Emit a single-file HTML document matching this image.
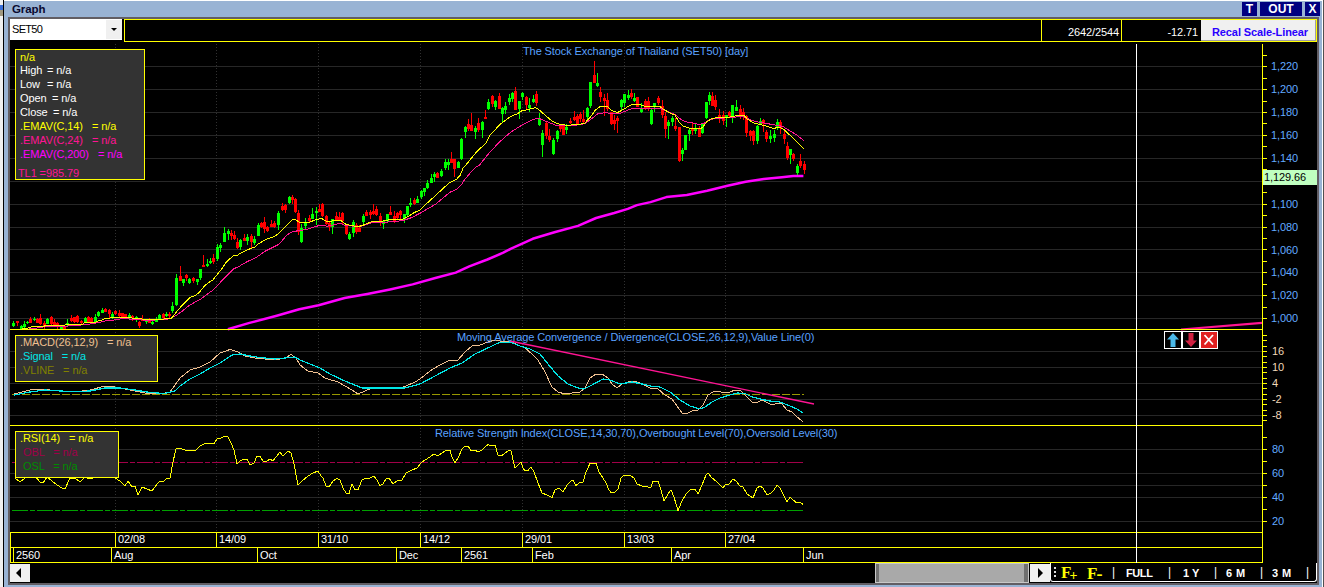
<!DOCTYPE html>
<html><head><meta charset="utf-8"><title>Graph</title>
<style>
html,body{margin:0;padding:0;}
body{width:1324px;height:587px;overflow:hidden;background:#99b3d4;font-family:"Liberation Sans",sans-serif;font-size:11px;position:relative;}
.abs{position:absolute;}
.t{position:absolute;white-space:nowrap;line-height:13px;font-size:11px;letter-spacing:-0.1px;}
.t i{position:absolute;font-style:normal;top:0;}
.ax{color:#62aaff;}
.mx{color:#f0d8b8;}
.w{color:#fff;}
.btn{position:absolute;background:#000080;color:#fff;font-weight:bold;font-size:12px;text-align:center;line-height:14px;top:2px;height:14px;}
.ib{position:absolute;background:#333;border:1px solid #ffff00;box-sizing:border-box;}
.tb{position:absolute;top:567px;color:#fff;font-weight:bold;font-size:11px;line-height:13px;white-space:nowrap;}
</style></head><body>
<!-- left strip / frame -->
<div class="abs" style="left:0;top:0;width:3px;height:587px;background:#f0f0f0"></div>
<div class="abs" style="left:0;top:5px;width:3px;height:5px;background:#3a6fd8"></div>
<div class="abs" style="left:0;top:10px;width:3px;height:6px;background:#a09880"></div>
<div class="abs" style="left:3px;top:0;width:1px;height:587px;background:#000"></div>
<div class="abs" style="left:4px;top:0;width:1319px;height:1px;background:#ffffff"></div>
<!-- inner gray border + black client -->
<div class="abs" style="left:8px;top:17px;width:1311px;height:568px;background:#625e64"></div>
<div class="abs" style="left:10px;top:19px;width:1307px;height:564px;background:#000"></div>
<div class="abs" style="left:1322px;top:0;width:1px;height:587px;background:#ffffff"></div>
<div class="abs" style="left:1323px;top:0;width:1px;height:587px;background:#505050"></div>
<!-- title -->
<div class="t" style="left:12px;top:2px;font-weight:bold;font-size:11.5px;color:#0a0a30;line-height:14px">Graph</div>
<div class="btn" style="left:1242px;width:15px;">T</div>
<div class="btn" style="left:1260px;width:42px;">OUT</div>
<div class="btn" style="left:1305px;width:15px;">X</div>
<!-- combo -->
<div class="abs" style="left:10px;top:19px;width:112px;height:21px;background:#fff"></div>
<div class="abs" style="left:106px;top:20px;width:16px;height:19px;background:#f0f0f0"></div>
<div class="abs" style="left:111px;top:28px;width:0;height:0;border-left:3px solid transparent;border-right:3px solid transparent;border-top:3px solid #000"></div>
<div class="t" style="left:12px;top:23px;color:#000;letter-spacing:-0.7px">SET50</div>
<!-- top yellow frame -->
<div class="abs" style="left:124px;top:19px;width:1193px;height:23px;border:1px solid #ffff00;box-sizing:border-box"></div>
<div class="abs" style="left:1041px;top:19px;width:1px;height:23px;background:#ffff00"></div>
<div class="abs" style="left:1121px;top:19px;width:1px;height:23px;background:#ffff00"></div>
<div class="t w" style="left:1042px;width:77px;text-align:right;top:26px;">2642/2544</div>
<div class="t w" style="left:1122px;width:76px;text-align:right;top:26px;">-12.71</div>
<div class="abs" style="left:1201px;top:20px;width:115px;height:21px;background:#f0f0f0;border-bottom:1px solid #a0a0a0;border-right:1px solid #a0a0a0;box-sizing:border-box"></div>
<div class="t" style="left:1201px;width:115px;text-align:center;top:26px;color:#2a00ff;font-weight:bold;font-size:11px;padding-left:3px;box-sizing:border-box">Recal Scale-Linear</div>

<svg class="abs" style="left:0;top:0" width="1324" height="587" viewBox="0 0 1324 587">
<rect x="10" y="66" width="1252" height="1" fill="#272727"/>
<rect x="10" y="89" width="1252" height="1" fill="#272727"/>
<rect x="10" y="112" width="1252" height="1" fill="#272727"/>
<rect x="10" y="135" width="1252" height="1" fill="#272727"/>
<rect x="10" y="158" width="1252" height="1" fill="#272727"/>
<rect x="10" y="181" width="1252" height="1" fill="#272727"/>
<rect x="10" y="204" width="1252" height="1" fill="#272727"/>
<rect x="10" y="227" width="1252" height="1" fill="#272727"/>
<rect x="10" y="249" width="1252" height="1" fill="#272727"/>
<rect x="10" y="272" width="1252" height="1" fill="#272727"/>
<rect x="10" y="295" width="1252" height="1" fill="#272727"/>
<rect x="10" y="318" width="1252" height="1" fill="#272727"/>
<rect x="10" y="351" width="1252" height="1" fill="#272727"/>
<rect x="10" y="367" width="1252" height="1" fill="#272727"/>
<rect x="10" y="383" width="1252" height="1" fill="#272727"/>
<rect x="10" y="399" width="1252" height="1" fill="#272727"/>
<rect x="10" y="415" width="1252" height="1" fill="#272727"/>
<rect x="10" y="449" width="1252" height="1" fill="#272727"/>
<rect x="10" y="473" width="1252" height="1" fill="#272727"/>
<rect x="10" y="485" width="1252" height="1" fill="#272727"/>
<rect x="10" y="497" width="1252" height="1" fill="#272727"/>
<rect x="10" y="521" width="1252" height="1" fill="#272727"/>
<line x1="115.5" y1="44" x2="115.5" y2="532" stroke="#303030" stroke-width="1" stroke-dasharray="1,2" shape-rendering="crispEdges"/>
<line x1="216.5" y1="44" x2="216.5" y2="532" stroke="#303030" stroke-width="1" stroke-dasharray="1,2" shape-rendering="crispEdges"/>
<line x1="318.5" y1="44" x2="318.5" y2="532" stroke="#303030" stroke-width="1" stroke-dasharray="1,2" shape-rendering="crispEdges"/>
<line x1="420.5" y1="44" x2="420.5" y2="532" stroke="#303030" stroke-width="1" stroke-dasharray="1,2" shape-rendering="crispEdges"/>
<line x1="522.5" y1="44" x2="522.5" y2="532" stroke="#303030" stroke-width="1" stroke-dasharray="1,2" shape-rendering="crispEdges"/>
<line x1="624.5" y1="44" x2="624.5" y2="532" stroke="#303030" stroke-width="1" stroke-dasharray="1,2" shape-rendering="crispEdges"/>
<line x1="725.5" y1="44" x2="725.5" y2="532" stroke="#303030" stroke-width="1" stroke-dasharray="1,2" shape-rendering="crispEdges"/>
<line x1="12" y1="394.5" x2="804" y2="394.5" stroke="#999900" stroke-width="1" stroke-dasharray="8,2" shape-rendering="crispEdges"/>
<line x1="12" y1="462.5" x2="804" y2="462.5" stroke="#a00048" stroke-width="1" stroke-dasharray="16,2,5,2" shape-rendering="crispEdges"/>
<line x1="12" y1="510.5" x2="804" y2="510.5" stroke="#00a000" stroke-width="1" stroke-dasharray="16,2,5,2" shape-rendering="crispEdges"/>
<polyline points="227.9,329.3 249.5,322.9 276.7,315.7 299.3,309.3 318.6,305.2 344.6,298.0 367.3,293.9 390.0,289.4 412.6,284.4 435.3,278.0 455.7,272.6 469.3,266.3 487.4,259.5 503.3,252.7 511.1,248.6 520.0,244.7 532.7,238.8 555.3,232.0 578.0,225.9 596.1,218.0 614.2,213.0 627.8,208.9 636.9,205.1 650.5,202.1 666.4,197.1 686.8,194.9 707.1,190.8 727.5,185.8 745.7,181.7 763.8,179.0 781.9,177.2 793.3,176.1 803.4,176.1" fill="none" stroke="#ff00ff" stroke-width="2.5" stroke-linejoin="round"/>
<line x1="1181" y1="329.5" x2="1262" y2="322.8" stroke="#ff1493" stroke-width="2.2"/>
<rect x="13" y="321" width="1" height="6" fill="#00ff00"/>
<rect x="12" y="323" width="3" height="3" fill="#00ff00"/>
<rect x="17" y="321" width="1" height="5" fill="#ff0000"/>
<rect x="16" y="321" width="3" height="2" fill="#ff0000"/>
<rect x="21" y="325" width="1" height="4" fill="#00ff00"/>
<rect x="20" y="326" width="3" height="3" fill="#00ff00"/>
<rect x="24" y="321" width="1" height="7" fill="#00ff00"/>
<rect x="23" y="324" width="3" height="3" fill="#00ff00"/>
<rect x="27" y="321" width="1" height="3" fill="#00ff00"/>
<rect x="26" y="322" width="3" height="1" fill="#00ff00"/>
<rect x="30" y="317" width="1" height="6" fill="#ff0000"/>
<rect x="29" y="319" width="3" height="4" fill="#ff0000"/>
<rect x="34" y="317" width="1" height="4" fill="#00ff00"/>
<rect x="33" y="319" width="3" height="1" fill="#00ff00"/>
<rect x="37" y="318" width="1" height="5" fill="#ff0000"/>
<rect x="36" y="319" width="3" height="4" fill="#ff0000"/>
<rect x="40" y="314" width="1" height="11" fill="#ff0000"/>
<rect x="39" y="318" width="3" height="6" fill="#ff0000"/>
<rect x="44" y="321" width="1" height="8" fill="#ff0000"/>
<rect x="43" y="323" width="3" height="3" fill="#ff0000"/>
<rect x="47" y="318" width="1" height="6" fill="#00ff00"/>
<rect x="46" y="319" width="3" height="5" fill="#00ff00"/>
<rect x="51" y="316" width="1" height="9" fill="#ff0000"/>
<rect x="50" y="317" width="3" height="7" fill="#ff0000"/>
<rect x="54" y="319" width="1" height="7" fill="#ff0000"/>
<rect x="53" y="322" width="3" height="3" fill="#ff0000"/>
<rect x="57" y="322" width="1" height="7" fill="#ff0000"/>
<rect x="56" y="323" width="3" height="3" fill="#ff0000"/>
<rect x="61" y="326" width="1" height="3" fill="#00ff00"/>
<rect x="60" y="327" width="3" height="2" fill="#00ff00"/>
<rect x="64" y="325" width="1" height="5" fill="#ff0000"/>
<rect x="63" y="326" width="3" height="3" fill="#ff0000"/>
<rect x="67" y="319" width="1" height="7" fill="#00ff00"/>
<rect x="66" y="323" width="3" height="2" fill="#00ff00"/>
<rect x="71" y="315" width="1" height="7" fill="#ff0000"/>
<rect x="70" y="318" width="3" height="3" fill="#ff0000"/>
<rect x="74" y="317" width="1" height="6" fill="#ff0000"/>
<rect x="73" y="317" width="3" height="5" fill="#ff0000"/>
<rect x="77" y="315" width="1" height="8" fill="#ff0000"/>
<rect x="76" y="316" width="3" height="6" fill="#ff0000"/>
<rect x="81" y="320" width="1" height="4" fill="#ff0000"/>
<rect x="80" y="321" width="3" height="2" fill="#ff0000"/>
<rect x="85" y="317" width="1" height="5" fill="#00ff00"/>
<rect x="84" y="318" width="3" height="4" fill="#00ff00"/>
<rect x="88" y="316" width="1" height="6" fill="#ff0000"/>
<rect x="87" y="317" width="3" height="5" fill="#ff0000"/>
<rect x="91" y="317" width="1" height="5" fill="#ff0000"/>
<rect x="90" y="318" width="3" height="4" fill="#ff0000"/>
<rect x="95" y="314" width="1" height="9" fill="#00ff00"/>
<rect x="94" y="317" width="3" height="5" fill="#00ff00"/>
<rect x="98" y="311" width="1" height="6" fill="#00ff00"/>
<rect x="97" y="312" width="3" height="4" fill="#00ff00"/>
<rect x="102" y="308" width="1" height="5" fill="#00ff00"/>
<rect x="101" y="310" width="3" height="3" fill="#00ff00"/>
<rect x="105" y="308" width="1" height="4" fill="#ff0000"/>
<rect x="104" y="309" width="3" height="3" fill="#ff0000"/>
<rect x="109" y="309" width="1" height="10" fill="#ff0000"/>
<rect x="108" y="310" width="3" height="4" fill="#ff0000"/>
<rect x="112" y="312" width="1" height="7" fill="#00ff00"/>
<rect x="111" y="314" width="3" height="4" fill="#00ff00"/>
<rect x="115" y="310" width="1" height="5" fill="#ff0000"/>
<rect x="114" y="311" width="3" height="3" fill="#ff0000"/>
<rect x="119" y="310" width="1" height="7" fill="#ff0000"/>
<rect x="118" y="313" width="3" height="3" fill="#ff0000"/>
<rect x="122" y="313" width="1" height="4" fill="#ff0000"/>
<rect x="121" y="313" width="3" height="4" fill="#ff0000"/>
<rect x="125" y="314" width="1" height="3" fill="#ff0000"/>
<rect x="124" y="314" width="3" height="3" fill="#ff0000"/>
<rect x="129" y="313" width="1" height="6" fill="#00ff00"/>
<rect x="128" y="315" width="3" height="3" fill="#00ff00"/>
<rect x="132" y="315" width="1" height="6" fill="#ff0000"/>
<rect x="131" y="316" width="3" height="2" fill="#ff0000"/>
<rect x="136" y="316" width="1" height="6" fill="#00ff00"/>
<rect x="135" y="317" width="3" height="2" fill="#00ff00"/>
<rect x="139" y="321" width="1" height="7" fill="#ff0000"/>
<rect x="138" y="322" width="3" height="4" fill="#ff0000"/>
<rect x="142" y="315" width="1" height="6" fill="#ff0000"/>
<rect x="141" y="319" width="3" height="2" fill="#ff0000"/>
<rect x="146" y="319" width="1" height="5" fill="#00ff00"/>
<rect x="145" y="321" width="3" height="1" fill="#00ff00"/>
<rect x="149" y="318" width="1" height="5" fill="#ff0000"/>
<rect x="148" y="319" width="3" height="4" fill="#ff0000"/>
<rect x="152" y="321" width="1" height="4" fill="#00ff00"/>
<rect x="151" y="322" width="3" height="2" fill="#00ff00"/>
<rect x="156" y="317" width="1" height="5" fill="#00ff00"/>
<rect x="155" y="319" width="3" height="3" fill="#00ff00"/>
<rect x="159" y="314" width="1" height="5" fill="#00ff00"/>
<rect x="158" y="315" width="3" height="4" fill="#00ff00"/>
<rect x="163" y="313" width="1" height="6" fill="#ff0000"/>
<rect x="162" y="314" width="3" height="4" fill="#ff0000"/>
<rect x="166" y="312" width="1" height="5" fill="#00ff00"/>
<rect x="165" y="314" width="3" height="2" fill="#00ff00"/>
<rect x="169" y="312" width="1" height="6" fill="#ff0000"/>
<rect x="168" y="314" width="3" height="2" fill="#ff0000"/>
<rect x="172" y="302" width="1" height="11" fill="#00ff00"/>
<rect x="171" y="306" width="3" height="5" fill="#00ff00"/>
<rect x="176" y="274" width="1" height="32" fill="#00ff00"/>
<rect x="175" y="278" width="3" height="27" fill="#00ff00"/>
<rect x="180" y="266" width="1" height="15" fill="#ff0000"/>
<rect x="179" y="276" width="3" height="5" fill="#ff0000"/>
<rect x="183" y="279" width="1" height="7" fill="#00ff00"/>
<rect x="182" y="279" width="3" height="4" fill="#00ff00"/>
<rect x="186" y="274" width="1" height="7" fill="#ff0000"/>
<rect x="185" y="275" width="3" height="3" fill="#ff0000"/>
<rect x="189" y="278" width="1" height="6" fill="#00ff00"/>
<rect x="188" y="279" width="3" height="4" fill="#00ff00"/>
<rect x="193" y="277" width="1" height="6" fill="#ff0000"/>
<rect x="192" y="278" width="3" height="3" fill="#ff0000"/>
<rect x="197" y="279" width="1" height="6" fill="#00ff00"/>
<rect x="196" y="279" width="3" height="3" fill="#00ff00"/>
<rect x="200" y="269" width="1" height="11" fill="#00ff00"/>
<rect x="199" y="269" width="3" height="9" fill="#00ff00"/>
<rect x="203" y="255" width="1" height="12" fill="#ff0000"/>
<rect x="202" y="265" width="3" height="2" fill="#ff0000"/>
<rect x="207" y="259" width="1" height="8" fill="#00ff00"/>
<rect x="206" y="264" width="3" height="2" fill="#00ff00"/>
<rect x="210" y="258" width="1" height="6" fill="#00ff00"/>
<rect x="209" y="261" width="3" height="2" fill="#00ff00"/>
<rect x="213" y="254" width="1" height="10" fill="#ff0000"/>
<rect x="212" y="258" width="3" height="4" fill="#ff0000"/>
<rect x="217" y="244" width="1" height="17" fill="#00ff00"/>
<rect x="216" y="247" width="3" height="12" fill="#00ff00"/>
<rect x="220" y="243" width="1" height="9" fill="#00ff00"/>
<rect x="219" y="245" width="3" height="3" fill="#00ff00"/>
<rect x="224" y="227" width="1" height="15" fill="#00ff00"/>
<rect x="223" y="233" width="3" height="9" fill="#00ff00"/>
<rect x="228" y="229" width="1" height="11" fill="#00ff00"/>
<rect x="227" y="231" width="3" height="3" fill="#00ff00"/>
<rect x="231" y="230" width="1" height="10" fill="#ff0000"/>
<rect x="230" y="233" width="3" height="3" fill="#ff0000"/>
<rect x="234" y="231" width="1" height="9" fill="#ff0000"/>
<rect x="233" y="235" width="3" height="4" fill="#ff0000"/>
<rect x="237" y="238" width="1" height="11" fill="#ff0000"/>
<rect x="236" y="242" width="3" height="6" fill="#ff0000"/>
<rect x="240" y="239" width="1" height="11" fill="#00ff00"/>
<rect x="239" y="240" width="3" height="7" fill="#00ff00"/>
<rect x="244" y="234" width="1" height="7" fill="#ff0000"/>
<rect x="243" y="238" width="3" height="3" fill="#ff0000"/>
<rect x="247" y="234" width="1" height="11" fill="#00ff00"/>
<rect x="246" y="237" width="3" height="4" fill="#00ff00"/>
<rect x="251" y="234" width="1" height="14" fill="#ff0000"/>
<rect x="250" y="236" width="3" height="6" fill="#ff0000"/>
<rect x="254" y="236" width="1" height="9" fill="#00ff00"/>
<rect x="253" y="239" width="3" height="4" fill="#00ff00"/>
<rect x="258" y="223" width="1" height="13" fill="#00ff00"/>
<rect x="257" y="225" width="3" height="11" fill="#00ff00"/>
<rect x="261" y="222" width="1" height="6" fill="#ff0000"/>
<rect x="260" y="223" width="3" height="4" fill="#ff0000"/>
<rect x="264" y="217" width="1" height="16" fill="#ff0000"/>
<rect x="263" y="222" width="3" height="7" fill="#ff0000"/>
<rect x="267" y="226" width="1" height="6" fill="#ff0000"/>
<rect x="266" y="227" width="3" height="4" fill="#ff0000"/>
<rect x="271" y="220" width="1" height="7" fill="#ff0000"/>
<rect x="270" y="224" width="3" height="3" fill="#ff0000"/>
<rect x="274" y="221" width="1" height="7" fill="#ff0000"/>
<rect x="273" y="223" width="3" height="4" fill="#ff0000"/>
<rect x="278" y="211" width="1" height="19" fill="#00ff00"/>
<rect x="277" y="213" width="3" height="12" fill="#00ff00"/>
<rect x="282" y="203" width="1" height="8" fill="#ff0000"/>
<rect x="281" y="206" width="3" height="4" fill="#ff0000"/>
<rect x="285" y="204" width="1" height="9" fill="#ff0000"/>
<rect x="284" y="205" width="3" height="5" fill="#ff0000"/>
<rect x="289" y="196" width="1" height="8" fill="#00ff00"/>
<rect x="288" y="197" width="3" height="6" fill="#00ff00"/>
<rect x="292" y="195" width="1" height="9" fill="#ff0000"/>
<rect x="291" y="197" width="3" height="3" fill="#ff0000"/>
<rect x="295" y="198" width="1" height="15" fill="#ff0000"/>
<rect x="294" y="199" width="3" height="13" fill="#ff0000"/>
<rect x="298" y="210" width="1" height="25" fill="#ff0000"/>
<rect x="297" y="213" width="3" height="19" fill="#ff0000"/>
<rect x="301" y="224" width="1" height="19" fill="#00ff00"/>
<rect x="300" y="228" width="3" height="14" fill="#00ff00"/>
<rect x="305" y="218" width="1" height="12" fill="#00ff00"/>
<rect x="304" y="222" width="3" height="4" fill="#00ff00"/>
<rect x="309" y="215" width="1" height="7" fill="#ff0000"/>
<rect x="308" y="218" width="3" height="3" fill="#ff0000"/>
<rect x="312" y="208" width="1" height="11" fill="#00ff00"/>
<rect x="311" y="214" width="3" height="5" fill="#00ff00"/>
<rect x="316" y="207" width="1" height="18" fill="#00ff00"/>
<rect x="315" y="211" width="3" height="2" fill="#00ff00"/>
<rect x="319" y="204" width="1" height="8" fill="#ff0000"/>
<rect x="318" y="209" width="3" height="3" fill="#ff0000"/>
<rect x="322" y="203" width="1" height="14" fill="#ff0000"/>
<rect x="321" y="204" width="3" height="12" fill="#ff0000"/>
<rect x="326" y="215" width="1" height="10" fill="#ff0000"/>
<rect x="325" y="216" width="3" height="8" fill="#ff0000"/>
<rect x="329" y="222" width="1" height="9" fill="#ff0000"/>
<rect x="328" y="223" width="3" height="4" fill="#ff0000"/>
<rect x="332" y="219" width="1" height="15" fill="#00ff00"/>
<rect x="331" y="219" width="3" height="8" fill="#00ff00"/>
<rect x="336" y="212" width="1" height="9" fill="#ff0000"/>
<rect x="335" y="216" width="3" height="4" fill="#ff0000"/>
<rect x="339" y="212" width="1" height="8" fill="#ff0000"/>
<rect x="338" y="217" width="3" height="3" fill="#ff0000"/>
<rect x="342" y="212" width="1" height="12" fill="#ff0000"/>
<rect x="341" y="213" width="3" height="8" fill="#ff0000"/>
<rect x="346" y="224" width="1" height="11" fill="#ff0000"/>
<rect x="345" y="225" width="3" height="9" fill="#ff0000"/>
<rect x="349" y="232" width="1" height="8" fill="#00ff00"/>
<rect x="348" y="234" width="3" height="5" fill="#00ff00"/>
<rect x="353" y="220" width="1" height="17" fill="#00ff00"/>
<rect x="352" y="222" width="3" height="11" fill="#00ff00"/>
<rect x="356" y="223" width="1" height="11" fill="#ff0000"/>
<rect x="355" y="225" width="3" height="7" fill="#ff0000"/>
<rect x="359" y="225" width="1" height="7" fill="#ff0000"/>
<rect x="358" y="228" width="3" height="4" fill="#ff0000"/>
<rect x="363" y="214" width="1" height="11" fill="#00ff00"/>
<rect x="362" y="216" width="3" height="6" fill="#00ff00"/>
<rect x="366" y="210" width="1" height="6" fill="#ff0000"/>
<rect x="365" y="212" width="3" height="4" fill="#ff0000"/>
<rect x="370" y="210" width="1" height="9" fill="#ff0000"/>
<rect x="369" y="212" width="3" height="3" fill="#ff0000"/>
<rect x="373" y="204" width="1" height="11" fill="#ff0000"/>
<rect x="372" y="211" width="3" height="3" fill="#ff0000"/>
<rect x="376" y="206" width="1" height="10" fill="#ff0000"/>
<rect x="375" y="209" width="3" height="6" fill="#ff0000"/>
<rect x="380" y="213" width="1" height="13" fill="#ff0000"/>
<rect x="379" y="216" width="3" height="5" fill="#ff0000"/>
<rect x="383" y="220" width="1" height="9" fill="#00ff00"/>
<rect x="382" y="221" width="3" height="3" fill="#00ff00"/>
<rect x="387" y="214" width="1" height="9" fill="#00ff00"/>
<rect x="386" y="214" width="3" height="7" fill="#00ff00"/>
<rect x="390" y="206" width="1" height="9" fill="#ff0000"/>
<rect x="389" y="212" width="3" height="3" fill="#ff0000"/>
<rect x="394" y="211" width="1" height="12" fill="#ff0000"/>
<rect x="393" y="216" width="3" height="5" fill="#ff0000"/>
<rect x="397" y="212" width="1" height="7" fill="#ff0000"/>
<rect x="396" y="213" width="3" height="5" fill="#ff0000"/>
<rect x="400" y="210" width="1" height="9" fill="#ff0000"/>
<rect x="399" y="211" width="3" height="4" fill="#ff0000"/>
<rect x="404" y="214" width="1" height="9" fill="#00ff00"/>
<rect x="403" y="214" width="3" height="6" fill="#00ff00"/>
<rect x="407" y="206" width="1" height="10" fill="#00ff00"/>
<rect x="406" y="206" width="3" height="9" fill="#00ff00"/>
<rect x="410" y="198" width="1" height="9" fill="#00ff00"/>
<rect x="409" y="203" width="3" height="2" fill="#00ff00"/>
<rect x="414" y="198" width="1" height="7" fill="#ff0000"/>
<rect x="413" y="200" width="3" height="4" fill="#ff0000"/>
<rect x="417" y="196" width="1" height="7" fill="#00ff00"/>
<rect x="416" y="199" width="3" height="4" fill="#00ff00"/>
<rect x="421" y="190" width="1" height="9" fill="#00ff00"/>
<rect x="420" y="191" width="3" height="6" fill="#00ff00"/>
<rect x="424" y="188" width="1" height="8" fill="#00ff00"/>
<rect x="423" y="188" width="3" height="4" fill="#00ff00"/>
<rect x="427" y="180" width="1" height="9" fill="#00ff00"/>
<rect x="426" y="183" width="3" height="5" fill="#00ff00"/>
<rect x="431" y="174" width="1" height="9" fill="#00ff00"/>
<rect x="430" y="178" width="3" height="5" fill="#00ff00"/>
<rect x="434" y="172" width="1" height="10" fill="#00ff00"/>
<rect x="433" y="174" width="3" height="3" fill="#00ff00"/>
<rect x="437" y="172" width="1" height="6" fill="#ff0000"/>
<rect x="436" y="173" width="3" height="5" fill="#ff0000"/>
<rect x="441" y="169" width="1" height="8" fill="#00ff00"/>
<rect x="440" y="171" width="3" height="5" fill="#00ff00"/>
<rect x="445" y="159" width="1" height="11" fill="#00ff00"/>
<rect x="444" y="162" width="3" height="6" fill="#00ff00"/>
<rect x="448" y="159" width="1" height="11" fill="#00ff00"/>
<rect x="447" y="162" width="3" height="3" fill="#00ff00"/>
<rect x="451" y="152" width="1" height="11" fill="#ff0000"/>
<rect x="450" y="159" width="3" height="4" fill="#ff0000"/>
<rect x="454" y="159" width="1" height="18" fill="#ff0000"/>
<rect x="453" y="159" width="3" height="10" fill="#ff0000"/>
<rect x="458" y="161" width="1" height="7" fill="#00ff00"/>
<rect x="457" y="162" width="3" height="6" fill="#00ff00"/>
<rect x="461" y="138" width="1" height="22" fill="#00ff00"/>
<rect x="460" y="139" width="3" height="20" fill="#00ff00"/>
<rect x="465" y="126" width="1" height="12" fill="#00ff00"/>
<rect x="464" y="127" width="3" height="5" fill="#00ff00"/>
<rect x="468" y="119" width="1" height="12" fill="#ff0000"/>
<rect x="467" y="124" width="3" height="5" fill="#ff0000"/>
<rect x="471" y="113" width="1" height="18" fill="#ff0000"/>
<rect x="470" y="125" width="3" height="6" fill="#ff0000"/>
<rect x="475" y="126" width="1" height="13" fill="#00ff00"/>
<rect x="474" y="128" width="3" height="4" fill="#00ff00"/>
<rect x="478" y="118" width="1" height="14" fill="#ff0000"/>
<rect x="477" y="123" width="3" height="7" fill="#ff0000"/>
<rect x="482" y="121" width="1" height="17" fill="#00ff00"/>
<rect x="481" y="122" width="3" height="8" fill="#00ff00"/>
<rect x="485" y="110" width="1" height="9" fill="#ff0000"/>
<rect x="484" y="117" width="3" height="2" fill="#ff0000"/>
<rect x="488" y="99" width="1" height="11" fill="#00ff00"/>
<rect x="487" y="102" width="3" height="7" fill="#00ff00"/>
<rect x="492" y="95" width="1" height="12" fill="#ff0000"/>
<rect x="491" y="96" width="3" height="8" fill="#ff0000"/>
<rect x="495" y="100" width="1" height="10" fill="#00ff00"/>
<rect x="494" y="101" width="3" height="6" fill="#00ff00"/>
<rect x="499" y="93" width="1" height="16" fill="#ff0000"/>
<rect x="498" y="96" width="3" height="13" fill="#ff0000"/>
<rect x="502" y="107" width="1" height="15" fill="#00ff00"/>
<rect x="501" y="108" width="3" height="6" fill="#00ff00"/>
<rect x="505" y="102" width="1" height="12" fill="#00ff00"/>
<rect x="504" y="106" width="3" height="4" fill="#00ff00"/>
<rect x="509" y="94" width="1" height="11" fill="#00ff00"/>
<rect x="508" y="98" width="3" height="4" fill="#00ff00"/>
<rect x="512" y="92" width="1" height="10" fill="#00ff00"/>
<rect x="511" y="93" width="3" height="6" fill="#00ff00"/>
<rect x="515" y="87" width="1" height="23" fill="#ff0000"/>
<rect x="514" y="91" width="3" height="19" fill="#ff0000"/>
<rect x="519" y="101" width="1" height="18" fill="#00ff00"/>
<rect x="518" y="101" width="3" height="8" fill="#00ff00"/>
<rect x="522" y="92" width="1" height="8" fill="#00ff00"/>
<rect x="521" y="93" width="3" height="4" fill="#00ff00"/>
<rect x="526" y="96" width="1" height="13" fill="#ff0000"/>
<rect x="525" y="97" width="3" height="8" fill="#ff0000"/>
<rect x="529" y="98" width="1" height="14" fill="#00ff00"/>
<rect x="528" y="105" width="3" height="3" fill="#00ff00"/>
<rect x="533" y="95" width="1" height="8" fill="#00ff00"/>
<rect x="532" y="99" width="3" height="3" fill="#00ff00"/>
<rect x="536" y="91" width="1" height="15" fill="#ff0000"/>
<rect x="535" y="94" width="3" height="9" fill="#ff0000"/>
<rect x="539" y="113" width="1" height="13" fill="#00ff00"/>
<rect x="538" y="118" width="3" height="7" fill="#00ff00"/>
<rect x="542" y="130" width="1" height="27" fill="#00ff00"/>
<rect x="541" y="133" width="3" height="12" fill="#00ff00"/>
<rect x="546" y="122" width="1" height="17" fill="#ff0000"/>
<rect x="545" y="123" width="3" height="13" fill="#ff0000"/>
<rect x="549" y="129" width="1" height="13" fill="#ff0000"/>
<rect x="548" y="136" width="3" height="4" fill="#ff0000"/>
<rect x="553" y="138" width="1" height="17" fill="#00ff00"/>
<rect x="552" y="140" width="3" height="14" fill="#00ff00"/>
<rect x="557" y="130" width="1" height="12" fill="#00ff00"/>
<rect x="556" y="131" width="3" height="8" fill="#00ff00"/>
<rect x="560" y="125" width="1" height="7" fill="#ff0000"/>
<rect x="559" y="126" width="3" height="3" fill="#ff0000"/>
<rect x="563" y="124" width="1" height="11" fill="#ff0000"/>
<rect x="562" y="125" width="3" height="10" fill="#ff0000"/>
<rect x="566" y="124" width="1" height="10" fill="#00ff00"/>
<rect x="565" y="127" width="3" height="3" fill="#00ff00"/>
<rect x="570" y="118" width="1" height="6" fill="#ff0000"/>
<rect x="569" y="121" width="3" height="2" fill="#ff0000"/>
<rect x="574" y="111" width="1" height="10" fill="#ff0000"/>
<rect x="573" y="117" width="3" height="3" fill="#ff0000"/>
<rect x="577" y="114" width="1" height="11" fill="#ff0000"/>
<rect x="576" y="116" width="3" height="8" fill="#ff0000"/>
<rect x="580" y="112" width="1" height="10" fill="#ff0000"/>
<rect x="579" y="114" width="3" height="5" fill="#ff0000"/>
<rect x="583" y="110" width="1" height="13" fill="#ff0000"/>
<rect x="582" y="119" width="3" height="3" fill="#ff0000"/>
<rect x="587" y="107" width="1" height="15" fill="#00ff00"/>
<rect x="586" y="108" width="3" height="9" fill="#00ff00"/>
<rect x="590" y="82" width="1" height="26" fill="#00ff00"/>
<rect x="589" y="82" width="3" height="24" fill="#00ff00"/>
<rect x="594" y="61" width="1" height="22" fill="#ff0000"/>
<rect x="593" y="75" width="3" height="8" fill="#ff0000"/>
<rect x="597" y="73" width="1" height="14" fill="#00ff00"/>
<rect x="596" y="83" width="3" height="3" fill="#00ff00"/>
<rect x="600" y="87" width="1" height="15" fill="#ff0000"/>
<rect x="599" y="92" width="3" height="5" fill="#ff0000"/>
<rect x="604" y="94" width="1" height="22" fill="#ff0000"/>
<rect x="603" y="98" width="3" height="3" fill="#ff0000"/>
<rect x="607" y="93" width="1" height="18" fill="#ff0000"/>
<rect x="606" y="100" width="3" height="9" fill="#ff0000"/>
<rect x="611" y="112" width="1" height="13" fill="#ff0000"/>
<rect x="610" y="112" width="3" height="12" fill="#ff0000"/>
<rect x="614" y="115" width="1" height="15" fill="#ff0000"/>
<rect x="613" y="120" width="3" height="4" fill="#ff0000"/>
<rect x="617" y="116" width="1" height="17" fill="#ff0000"/>
<rect x="616" y="118" width="3" height="3" fill="#ff0000"/>
<rect x="621" y="99" width="1" height="12" fill="#00ff00"/>
<rect x="620" y="100" width="3" height="7" fill="#00ff00"/>
<rect x="624" y="94" width="1" height="13" fill="#00ff00"/>
<rect x="623" y="94" width="3" height="9" fill="#00ff00"/>
<rect x="628" y="90" width="1" height="10" fill="#00ff00"/>
<rect x="627" y="95" width="3" height="3" fill="#00ff00"/>
<rect x="631" y="89" width="1" height="10" fill="#ff0000"/>
<rect x="630" y="93" width="3" height="4" fill="#ff0000"/>
<rect x="634" y="93" width="1" height="9" fill="#00ff00"/>
<rect x="633" y="98" width="3" height="3" fill="#00ff00"/>
<rect x="637" y="97" width="1" height="10" fill="#ff0000"/>
<rect x="636" y="97" width="3" height="10" fill="#ff0000"/>
<rect x="641" y="103" width="1" height="10" fill="#00ff00"/>
<rect x="640" y="109" width="3" height="3" fill="#00ff00"/>
<rect x="645" y="99" width="1" height="11" fill="#ff0000"/>
<rect x="644" y="101" width="3" height="8" fill="#ff0000"/>
<rect x="648" y="97" width="1" height="14" fill="#ff0000"/>
<rect x="647" y="101" width="3" height="8" fill="#ff0000"/>
<rect x="651" y="109" width="1" height="16" fill="#00ff00"/>
<rect x="650" y="110" width="3" height="14" fill="#00ff00"/>
<rect x="654" y="103" width="1" height="9" fill="#00ff00"/>
<rect x="653" y="103" width="3" height="4" fill="#00ff00"/>
<rect x="658" y="96" width="1" height="9" fill="#ff0000"/>
<rect x="657" y="98" width="3" height="5" fill="#ff0000"/>
<rect x="662" y="100" width="1" height="18" fill="#ff0000"/>
<rect x="661" y="106" width="3" height="9" fill="#ff0000"/>
<rect x="665" y="112" width="1" height="26" fill="#ff0000"/>
<rect x="664" y="116" width="3" height="13" fill="#ff0000"/>
<rect x="668" y="120" width="1" height="19" fill="#00ff00"/>
<rect x="667" y="122" width="3" height="4" fill="#00ff00"/>
<rect x="672" y="116" width="1" height="10" fill="#00ff00"/>
<rect x="671" y="118" width="3" height="4" fill="#00ff00"/>
<rect x="675" y="118" width="1" height="13" fill="#ff0000"/>
<rect x="674" y="126" width="3" height="3" fill="#ff0000"/>
<rect x="679" y="127" width="1" height="35" fill="#ff0000"/>
<rect x="678" y="127" width="3" height="34" fill="#ff0000"/>
<rect x="682" y="148" width="1" height="13" fill="#00ff00"/>
<rect x="681" y="150" width="3" height="4" fill="#00ff00"/>
<rect x="685" y="135" width="1" height="15" fill="#00ff00"/>
<rect x="684" y="135" width="3" height="15" fill="#00ff00"/>
<rect x="689" y="129" width="1" height="12" fill="#00ff00"/>
<rect x="688" y="130" width="3" height="4" fill="#00ff00"/>
<rect x="692" y="123" width="1" height="12" fill="#ff0000"/>
<rect x="691" y="128" width="3" height="3" fill="#ff0000"/>
<rect x="695" y="124" width="1" height="10" fill="#00ff00"/>
<rect x="694" y="129" width="3" height="2" fill="#00ff00"/>
<rect x="699" y="126" width="1" height="11" fill="#ff0000"/>
<rect x="698" y="129" width="3" height="8" fill="#ff0000"/>
<rect x="702" y="123" width="1" height="11" fill="#00ff00"/>
<rect x="701" y="124" width="3" height="9" fill="#00ff00"/>
<rect x="706" y="102" width="1" height="17" fill="#00ff00"/>
<rect x="705" y="102" width="3" height="16" fill="#00ff00"/>
<rect x="709" y="92" width="1" height="13" fill="#00ff00"/>
<rect x="708" y="95" width="3" height="6" fill="#00ff00"/>
<rect x="712" y="92" width="1" height="14" fill="#ff0000"/>
<rect x="711" y="96" width="3" height="10" fill="#ff0000"/>
<rect x="715" y="95" width="1" height="15" fill="#ff0000"/>
<rect x="714" y="100" width="3" height="7" fill="#ff0000"/>
<rect x="719" y="109" width="1" height="14" fill="#ff0000"/>
<rect x="718" y="115" width="3" height="3" fill="#ff0000"/>
<rect x="723" y="111" width="1" height="14" fill="#ff0000"/>
<rect x="722" y="115" width="3" height="6" fill="#ff0000"/>
<rect x="726" y="115" width="1" height="12" fill="#00ff00"/>
<rect x="725" y="115" width="3" height="3" fill="#00ff00"/>
<rect x="729" y="111" width="1" height="6" fill="#ff0000"/>
<rect x="728" y="112" width="3" height="4" fill="#ff0000"/>
<rect x="732" y="105" width="1" height="18" fill="#00ff00"/>
<rect x="731" y="105" width="3" height="11" fill="#00ff00"/>
<rect x="736" y="100" width="1" height="11" fill="#00ff00"/>
<rect x="735" y="107" width="3" height="4" fill="#00ff00"/>
<rect x="740" y="105" width="1" height="14" fill="#ff0000"/>
<rect x="739" y="109" width="3" height="6" fill="#ff0000"/>
<rect x="743" y="108" width="1" height="12" fill="#ff0000"/>
<rect x="742" y="112" width="3" height="4" fill="#ff0000"/>
<rect x="746" y="115" width="1" height="22" fill="#ff0000"/>
<rect x="745" y="116" width="3" height="17" fill="#ff0000"/>
<rect x="750" y="130" width="1" height="11" fill="#ff0000"/>
<rect x="749" y="131" width="3" height="5" fill="#ff0000"/>
<rect x="753" y="130" width="1" height="15" fill="#ff0000"/>
<rect x="752" y="131" width="3" height="10" fill="#ff0000"/>
<rect x="757" y="125" width="1" height="19" fill="#00ff00"/>
<rect x="756" y="126" width="3" height="15" fill="#00ff00"/>
<rect x="760" y="118" width="1" height="7" fill="#00ff00"/>
<rect x="759" y="121" width="3" height="3" fill="#00ff00"/>
<rect x="763" y="119" width="1" height="13" fill="#ff0000"/>
<rect x="762" y="120" width="3" height="4" fill="#ff0000"/>
<rect x="766" y="130" width="1" height="12" fill="#ff0000"/>
<rect x="765" y="132" width="3" height="7" fill="#ff0000"/>
<rect x="770" y="130" width="1" height="13" fill="#00ff00"/>
<rect x="769" y="136" width="3" height="3" fill="#00ff00"/>
<rect x="774" y="130" width="1" height="12" fill="#00ff00"/>
<rect x="773" y="134" width="3" height="4" fill="#00ff00"/>
<rect x="777" y="119" width="1" height="11" fill="#00ff00"/>
<rect x="776" y="122" width="3" height="5" fill="#00ff00"/>
<rect x="780" y="120" width="1" height="14" fill="#ff0000"/>
<rect x="779" y="122" width="3" height="6" fill="#ff0000"/>
<rect x="784" y="131" width="1" height="13" fill="#ff0000"/>
<rect x="783" y="134" width="3" height="5" fill="#ff0000"/>
<rect x="787" y="142" width="1" height="18" fill="#ff0000"/>
<rect x="786" y="146" width="3" height="12" fill="#ff0000"/>
<rect x="790" y="149" width="1" height="15" fill="#00ff00"/>
<rect x="789" y="149" width="3" height="6" fill="#00ff00"/>
<rect x="793" y="153" width="1" height="8" fill="#ff0000"/>
<rect x="792" y="154" width="3" height="5" fill="#ff0000"/>
<rect x="797" y="164" width="1" height="11" fill="#00ff00"/>
<rect x="796" y="166" width="3" height="7" fill="#00ff00"/>
<rect x="800" y="154" width="1" height="14" fill="#ff0000"/>
<rect x="799" y="161" width="3" height="5" fill="#ff0000"/>
<rect x="804" y="161" width="1" height="13" fill="#ff0000"/>
<rect x="803" y="164" width="3" height="6" fill="#ff0000"/>
<polyline points="22.7,329.7 35.2,328.3 44.7,326.7 62.4,326.4 73.3,325.6 85.5,324.7 95.0,323.3 103.2,321.5 108.6,320.2 116.8,319.9 120.8,318.8 137.1,319.2 143.9,320.2 161.6,319.9 171.1,318.5 174.0,316.5 176.9,315.0 182.9,310.6 188.8,305.8 194.8,302.2 200.8,299.2 206.7,294.5 212.7,290.3 218.6,284.3 224.6,277.8 230.0,272.4 234.1,268.6 238.9,266.5 243.7,263.5 248.4,261.1 255.0,257.9 257.2,256.8 265.0,251.3 279.0,244.2 287.0,235.0 292.6,231.6 306.3,229.5 318.5,225.7 328.0,226.1 340.0,223.4 345.5,225.4 353.6,226.1 361.8,226.1 371.3,223.0 380.9,222.4 394.5,221.6 402.7,220.6 410.9,217.9 419.0,213.8 427.2,209.1 435.4,204.3 443.6,197.5 450.4,192.0 456.5,189.3 462.6,183.2 464.0,180.4 470.8,172.3 476.3,166.8 479.5,165.0 489.0,153.1 500.0,141.5 510.9,132.0 521.8,125.2 532.7,119.7 538.1,118.0 543.6,120.4 549.0,122.5 555.8,125.2 565.4,125.6 576.3,125.2 584.4,123.8 591.2,119.1 598.1,113.6 606.2,112.7 613.0,114.0 619.1,113.9 625.9,110.9 632.7,108.4 639.5,108.1 646.3,108.4 660.0,108.4 665.4,110.6 670.8,112.9 675.0,114.3 680.4,119.0 685.8,121.8 692.6,122.9 698.1,124.2 703.5,123.8 707.7,120.7 713.8,118.7 723.0,118.1 732.2,117.2 742.9,116.6 749.0,119.2 755.2,121.5 764.4,123.0 773.6,124.8 782.8,126.4 788.9,130.3 796.6,134.9 803.9,140.6" fill="none" stroke="#ff1493" stroke-width="1" shape-rendering="crispEdges" />
<polyline points="21.6,329.0 28.4,328.0 32.5,326.4 44.0,326.4 46.0,325.0 65.0,325.0 73.0,324.0 82.8,324.0 84.0,323.0 95.0,322.6 97.7,321.0 101.8,320.2 105.2,318.3 111.3,317.9 114.0,317.2 130.3,317.2 133.0,318.3 142.0,319.0 144.0,319.6 161.6,319.2 171.0,318.3 173.2,316.5 176.9,311.2 182.9,304.6 190.0,297.5 194.8,295.7 199.6,292.1 204.3,286.1 208.5,282.5 212.7,280.2 217.5,274.2 222.2,268.2 225.8,262.9 230.0,258.7 233.5,255.5 237.1,255.5 241.3,252.7 247.3,249.8 255.0,247.1 257.2,244.5 265.4,239.7 274.9,236.3 279.0,233.3 287.2,224.7 292.6,219.3 295.4,219.3 299.4,222.4 309.0,222.4 314.4,220.2 321.2,218.3 325.3,220.7 328.0,221.6 340.0,220.0 345.5,224.0 350.9,225.7 359.0,226.5 364.5,224.7 372.0,221.6 380.9,221.6 387.7,220.0 394.5,219.5 402.0,219.5 408.1,216.5 414.3,212.5 419.7,210.1 425.8,204.3 435.4,195.7 443.6,187.9 449.7,182.5 456.5,179.3 459.9,175.7 463.3,167.5 465.9,165.0 476.8,151.5 485.6,143.6 489.7,135.4 500.0,124.5 510.9,116.3 516.3,114.3 521.8,110.9 528.6,109.5 535.4,107.5 539.5,110.2 546.3,116.3 553.1,121.8 559.9,124.5 566.7,125.2 576.3,124.8 584.4,123.4 589.9,117.7 595.3,110.2 600.1,106.5 607.5,106.5 612.3,110.9 617.7,112.5 623.2,109.5 630.0,105.4 634.0,104.0 639.5,104.3 645.0,106.5 653.1,106.8 660.0,106.5 664.0,109.5 669.5,112.9 675.0,115.0 679.0,121.8 683.1,125.9 688.6,127.9 695.4,128.9 702.2,127.9 706.9,121.5 710.7,119.2 716.9,117.6 726.0,117.6 732.2,116.6 738.3,115.3 743.7,115.3 747.5,119.2 753.6,123.0 761.3,124.8 767.4,126.4 773.6,128.4 778.9,127.3 783.5,129.1 787.4,133.0 792.0,136.8 798.1,142.9 803.9,149.0" fill="none" stroke="#ffff00" stroke-width="1" shape-rendering="crispEdges" />
<polyline points="14.0,394.0 30.0,390.0 45.0,389.5 60.0,391.0 75.0,392.0 90.0,390.0 105.0,386.0 115.0,387.0 130.0,390.0 145.0,393.0 160.0,394.0 170.0,392.0 175.0,385.0 180.0,378.0 190.0,370.0 200.0,367.0 210.0,362.0 220.0,353.0 230.0,349.5 238.0,352.0 245.0,356.0 255.0,358.0 265.0,359.0 275.0,360.0 285.0,358.0 291.0,354.5 296.0,358.0 300.0,365.0 308.0,371.0 318.0,373.0 325.0,378.0 328.0,379.0 338.0,382.0 345.0,386.0 352.0,390.0 358.0,394.0 365.0,391.0 372.0,388.0 380.0,388.0 390.0,388.0 400.0,388.0 406.0,386.0 415.0,382.0 420.0,379.0 430.0,371.0 440.0,365.0 450.0,360.0 457.0,361.0 465.0,352.0 472.0,346.0 480.0,345.0 488.0,342.0 495.0,340.0 502.0,341.5 510.0,341.5 518.0,345.0 525.0,348.0 532.0,354.0 538.0,360.0 545.0,372.0 552.0,387.0 558.0,392.0 565.0,394.0 572.0,393.0 580.0,392.0 585.0,388.0 590.0,378.0 596.0,374.0 602.0,374.0 608.0,378.0 612.0,384.0 617.0,388.0 622.0,384.0 628.0,382.0 635.0,381.0 642.0,384.0 650.0,388.0 658.0,389.0 665.0,395.0 672.0,399.0 677.0,406.0 682.0,413.0 686.0,414.0 692.0,411.0 698.0,410.0 703.0,405.0 708.0,395.0 713.0,392.0 718.0,391.0 724.0,393.0 730.0,392.0 735.0,390.0 740.0,390.0 745.0,395.0 752.0,402.0 758.0,402.0 762.0,400.0 768.0,403.0 772.0,405.0 778.0,403.0 782.0,404.0 787.0,410.0 792.0,412.0 797.0,417.0 803.0,421.5" fill="none" stroke="#f0c090" stroke-width="1" shape-rendering="crispEdges" />
<polyline points="14.0,395.0 30.0,392.0 45.0,390.0 60.0,391.0 75.0,391.5 90.0,391.0 105.0,388.0 120.0,388.0 135.0,390.0 150.0,392.5 165.0,393.5 175.0,391.0 180.0,386.0 190.0,379.0 200.0,374.0 210.0,368.0 220.0,363.0 232.0,355.0 240.0,354.0 250.0,356.0 260.0,357.5 275.0,359.0 285.0,358.0 295.0,357.0 300.0,360.0 310.0,364.0 320.0,368.0 330.0,374.0 345.0,381.0 362.0,388.0 380.0,388.0 405.0,388.0 420.0,384.0 435.0,376.0 450.0,368.0 462.0,363.0 475.0,354.0 490.0,347.0 498.0,343.0 510.0,342.0 520.0,346.0 530.0,349.0 540.0,354.0 548.0,364.0 558.0,376.0 568.0,384.0 578.0,388.0 584.0,389.0 592.0,385.0 603.0,379.0 610.0,380.0 620.0,384.0 632.0,382.0 642.0,384.0 650.0,386.0 660.0,387.0 670.0,392.0 680.0,400.0 690.0,406.0 700.0,409.0 705.0,407.0 712.0,402.0 720.0,398.0 730.0,395.0 738.0,393.0 745.0,393.5 752.0,397.0 760.0,399.0 770.0,401.0 780.0,402.0 790.0,406.0 797.0,409.0 803.0,413.0" fill="none" stroke="#00e6e6" stroke-width="1.2" shape-rendering="crispEdges" />
<line x1="510" y1="341" x2="814" y2="404" stroke="#ff1493" stroke-width="1.3"/>
<polyline points="15.0,478.0 20.0,482.0 25.0,478.0 35.0,476.0 40.0,482.0 43.0,483.0 47.0,477.0 52.0,481.0 57.0,485.0 62.0,488.0 65.0,489.0 70.0,478.0 75.0,478.0 80.0,482.0 85.0,477.0 90.0,479.0 95.0,477.0 105.0,476.0 115.0,478.0 120.0,481.0 125.0,486.0 128.0,481.0 132.0,487.0 135.0,486.0 138.0,495.0 142.0,487.0 147.0,489.0 152.0,491.0 157.0,484.0 160.0,481.0 163.0,482.0 167.0,478.0 170.0,478.0 173.0,462.0 176.0,449.0 180.0,448.5 185.0,450.0 190.0,450.0 196.0,450.0 200.0,446.0 205.0,443.5 210.0,443.0 214.0,444.0 217.0,439.0 221.0,438.0 224.0,436.5 228.0,437.0 231.0,443.0 234.0,450.0 237.0,464.0 240.0,461.0 244.0,459.0 247.0,459.0 250.0,465.0 254.0,463.0 257.0,456.0 260.0,456.0 263.0,461.0 267.0,461.0 270.0,459.0 273.0,461.0 276.0,457.0 280.0,452.0 283.0,456.0 288.0,451.0 291.0,453.0 294.0,464.0 298.0,485.0 302.0,481.0 308.0,476.0 313.0,473.0 318.0,471.0 321.0,476.0 323.0,478.0 326.0,486.0 329.0,487.0 333.0,481.0 337.0,478.5 340.0,480.0 343.0,488.0 346.0,493.0 349.0,493.5 352.0,484.0 355.0,490.0 358.0,489.5 362.0,480.0 366.0,478.0 370.0,478.0 374.0,476.0 377.0,480.0 380.0,485.5 383.0,484.0 386.0,479.0 389.0,478.0 393.0,484.0 397.0,481.0 402.0,480.0 406.0,473.0 412.0,470.0 417.0,468.0 421.0,463.0 425.0,460.0 430.0,457.0 434.0,454.0 438.0,456.0 442.0,453.0 446.0,450.5 450.0,450.5 452.0,457.0 455.0,463.0 458.0,458.0 462.0,449.0 465.0,446.0 468.0,446.0 471.0,450.5 475.0,450.0 478.0,452.0 482.0,450.0 485.0,447.0 488.0,444.5 491.0,446.0 495.0,445.0 498.0,455.0 502.0,455.5 505.0,453.0 508.0,451.0 511.0,450.5 513.0,460.0 515.0,468.0 518.0,465.0 521.0,462.0 523.0,468.0 525.0,471.0 528.0,470.5 531.0,467.0 534.0,472.0 538.0,483.0 542.0,493.0 547.0,495.0 552.0,497.5 555.0,490.0 559.0,488.0 563.0,492.0 567.0,485.0 571.0,481.0 573.0,480.0 576.0,485.5 579.0,483.0 583.0,482.0 586.0,472.0 590.0,463.5 596.0,463.5 599.0,472.0 603.0,478.0 606.0,483.0 609.0,490.0 611.0,492.5 615.0,492.0 618.0,489.0 621.0,478.0 624.0,475.0 630.0,475.0 634.0,478.0 637.0,484.0 642.0,486.0 648.0,487.0 651.0,487.0 653.0,481.0 658.0,481.0 661.0,490.0 664.0,501.0 668.0,494.0 671.0,490.0 674.0,497.0 678.0,510.5 682.0,501.0 686.0,494.0 690.0,490.0 695.0,489.0 698.0,494.0 702.0,485.0 706.0,475.0 708.0,473.0 712.0,478.0 716.0,481.0 720.0,485.0 723.0,488.0 726.0,484.0 729.0,484.0 733.0,479.0 736.0,481.0 740.0,486.0 743.0,487.0 747.0,494.0 750.0,496.0 753.0,498.0 757.0,488.0 760.0,486.0 763.0,488.0 767.0,495.0 771.0,493.0 774.0,490.0 777.0,485.0 780.0,488.0 783.0,494.0 787.0,502.0 790.0,497.0 793.0,500.0 797.0,503.0 800.0,502.0 803.0,504.5" fill="none" stroke="#ffff00" stroke-width="1" shape-rendering="crispEdges" />
<rect x="10" y="329" width="1253" height="1" fill="#ffff00"/>
<rect x="10" y="425" width="1253" height="1" fill="#ffff00"/>
<rect x="10" y="532" width="1253" height="1" fill="#ffff00"/>
<rect x="10" y="547" width="1253" height="1" fill="#ffff00"/>
<rect x="10" y="562" width="1253" height="1" fill="#ffff00"/>
<rect x="10" y="532" width="1" height="31" fill="#ffff00"/>
<rect x="13" y="547" width="1" height="16" fill="#ffff00"/>
<rect x="1262" y="44" width="1" height="519" fill="#ffff00"/>
<rect x="115" y="532" width="1" height="16" fill="#ffff00"/>
<rect x="216" y="532" width="1" height="16" fill="#ffff00"/>
<rect x="318" y="532" width="1" height="16" fill="#ffff00"/>
<rect x="420" y="532" width="1" height="16" fill="#ffff00"/>
<rect x="522" y="532" width="1" height="16" fill="#ffff00"/>
<rect x="624" y="532" width="1" height="16" fill="#ffff00"/>
<rect x="725" y="532" width="1" height="16" fill="#ffff00"/>
<rect x="111" y="547" width="1" height="16" fill="#ffff00"/>
<rect x="257" y="547" width="1" height="16" fill="#ffff00"/>
<rect x="396" y="547" width="1" height="16" fill="#ffff00"/>
<rect x="461" y="547" width="1" height="16" fill="#ffff00"/>
<rect x="532" y="547" width="1" height="16" fill="#ffff00"/>
<rect x="671" y="547" width="1" height="16" fill="#ffff00"/>
<rect x="803" y="547" width="1" height="16" fill="#ffff00"/>
<rect x="1263" y="318" width="4" height="1" fill="#ffff00"/>
<rect x="1263" y="307" width="4" height="1" fill="#ffff00"/>
<rect x="1263" y="295" width="4" height="1" fill="#ffff00"/>
<rect x="1263" y="284" width="4" height="1" fill="#ffff00"/>
<rect x="1263" y="272" width="4" height="1" fill="#ffff00"/>
<rect x="1263" y="261" width="4" height="1" fill="#ffff00"/>
<rect x="1263" y="249" width="4" height="1" fill="#ffff00"/>
<rect x="1263" y="238" width="4" height="1" fill="#ffff00"/>
<rect x="1263" y="227" width="4" height="1" fill="#ffff00"/>
<rect x="1263" y="215" width="4" height="1" fill="#ffff00"/>
<rect x="1263" y="204" width="4" height="1" fill="#ffff00"/>
<rect x="1263" y="192" width="4" height="1" fill="#ffff00"/>
<rect x="1263" y="181" width="4" height="1" fill="#ffff00"/>
<rect x="1263" y="169" width="4" height="1" fill="#ffff00"/>
<rect x="1263" y="158" width="4" height="1" fill="#ffff00"/>
<rect x="1263" y="146" width="4" height="1" fill="#ffff00"/>
<rect x="1263" y="135" width="4" height="1" fill="#ffff00"/>
<rect x="1263" y="123" width="4" height="1" fill="#ffff00"/>
<rect x="1263" y="112" width="4" height="1" fill="#ffff00"/>
<rect x="1263" y="101" width="4" height="1" fill="#ffff00"/>
<rect x="1263" y="89" width="4" height="1" fill="#ffff00"/>
<rect x="1263" y="78" width="4" height="1" fill="#ffff00"/>
<rect x="1263" y="66" width="4" height="1" fill="#ffff00"/>
<rect x="1263" y="55" width="4" height="1" fill="#ffff00"/>
<rect x="1263" y="420" width="4" height="1" fill="#ffff00"/>
<rect x="1263" y="415" width="4" height="1" fill="#ffff00"/>
<rect x="1263" y="410" width="4" height="1" fill="#ffff00"/>
<rect x="1263" y="404" width="4" height="1" fill="#ffff00"/>
<rect x="1263" y="399" width="4" height="1" fill="#ffff00"/>
<rect x="1263" y="394" width="4" height="1" fill="#ffff00"/>
<rect x="1263" y="388" width="4" height="1" fill="#ffff00"/>
<rect x="1263" y="383" width="4" height="1" fill="#ffff00"/>
<rect x="1263" y="378" width="4" height="1" fill="#ffff00"/>
<rect x="1263" y="372" width="4" height="1" fill="#ffff00"/>
<rect x="1263" y="367" width="4" height="1" fill="#ffff00"/>
<rect x="1263" y="362" width="4" height="1" fill="#ffff00"/>
<rect x="1263" y="356" width="4" height="1" fill="#ffff00"/>
<rect x="1263" y="351" width="4" height="1" fill="#ffff00"/>
<rect x="1263" y="346" width="4" height="1" fill="#ffff00"/>
<rect x="1263" y="340" width="4" height="1" fill="#ffff00"/>
<rect x="1263" y="335" width="4" height="1" fill="#ffff00"/>
<rect x="1263" y="521" width="4" height="1" fill="#ffff00"/>
<rect x="1263" y="509" width="4" height="1" fill="#ffff00"/>
<rect x="1263" y="497" width="4" height="1" fill="#ffff00"/>
<rect x="1263" y="485" width="4" height="1" fill="#ffff00"/>
<rect x="1263" y="473" width="4" height="1" fill="#ffff00"/>
<rect x="1263" y="461" width="4" height="1" fill="#ffff00"/>
<rect x="1263" y="449" width="4" height="1" fill="#ffff00"/>
<rect x="1263" y="437" width="4" height="1" fill="#ffff00"/>
<rect x="1136" y="44" width="1" height="519" fill="#ffffff"/>
</svg>

<!-- chart titles -->
<div class="t" style="left:523px;top:45px;color:#5aa2ff;">The Stock Exchange of Thailand (SET50) [day]</div>
<div class="t" style="left:457px;top:331px;color:#5aa2ff;">Moving Average Convergence / Divergence(CLOSE,26,12,9),Value Line(0)</div>
<div class="t" style="left:435px;top:427px;color:#5aa2ff;">Relative Strength Index(CLOSE,14,30,70),Overbought Level(70),Oversold Level(30)</div>

<!-- info boxes -->
<div class="ib" style="left:15px;top:49px;width:130px;height:131px;"></div>
<div class="t" style="left:20px;top:51px;color:#ffff00">n/a</div>
<div class="t w" style="left:20px;top:64px;">High<i style="left:27px">= n/a</i></div>
<div class="t w" style="left:20px;top:78px;">Low<i style="left:27px">= n/a</i></div>
<div class="t w" style="left:20px;top:92px;">Open<i style="left:32px">= n/a</i></div>
<div class="t w" style="left:20px;top:106px;">Close<i style="left:33px">= n/a</i></div>
<div class="t" style="left:20px;top:120px;color:#ffff00">.EMAV(C,14)<i style="left:72px">= n/a</i></div>
<div class="t" style="left:20px;top:134px;color:#ff1493">.EMAV(C,24)<i style="left:72px">= n/a</i></div>
<div class="t" style="left:20px;top:148px;color:#ff00ff">.EMAV(C,200)<i style="left:78px">= n/a</i></div>
<div class="t" style="left:18px;top:167px;color:#ff1493">TL1 =985.79</div>

<div class="ib" style="left:15px;top:335px;width:143px;height:47px;"></div>
<div class="t" style="left:20px;top:336px;color:#f0c090">.MACD(26,12,9) &nbsp; = n/a</div>
<div class="t" style="left:20px;top:350px;color:#00e6e6">.Signal &nbsp; = n/a</div>
<div class="t" style="left:20px;top:364px;color:#808000">.VLINE &nbsp; = n/a</div>

<div class="ib" style="left:15px;top:431px;width:104px;height:47px;"></div>
<div class="t" style="left:20px;top:432px;color:#ffff00">.RSI(14) &nbsp; = n/a</div>
<div class="t" style="left:23px;top:446px;color:#a0004a">OBL &nbsp; = n/a</div>
<div class="t" style="left:23px;top:460px;color:#008c00">OSL &nbsp; = n/a</div>

<!-- axis labels -->
<div class="t ax" style="left:1271px;top:60px;">1,220</div>
<div class="t ax" style="left:1271px;top:83px;">1,200</div>
<div class="t ax" style="left:1271px;top:106px;">1,180</div>
<div class="t ax" style="left:1271px;top:129px;">1,160</div>
<div class="t ax" style="left:1271px;top:152px;">1,140</div>
<div class="t ax" style="left:1271px;top:198px;">1,100</div>
<div class="t ax" style="left:1271px;top:221px;">1,080</div>
<div class="t ax" style="left:1271px;top:244px;">1,060</div>
<div class="t ax" style="left:1271px;top:266px;">1,040</div>
<div class="t ax" style="left:1271px;top:289px;">1,020</div>
<div class="t ax" style="left:1271px;top:312px;">1,000</div>
<div class="t mx" style="left:1272px;top:345px;">16</div>
<div class="t mx" style="left:1272px;top:361px;">10</div>
<div class="t mx" style="left:1272px;top:377px;">4</div>
<div class="t mx" style="left:1272px;top:393px;">-2</div>
<div class="t mx" style="left:1272px;top:409px;">-8</div>
<div class="t ax" style="left:1272px;top:443px;">80</div>
<div class="t ax" style="left:1272px;top:467px;">60</div>
<div class="t ax" style="left:1272px;top:491px;">40</div>
<div class="t ax" style="left:1272px;top:515px;">20</div>
<div class="abs" style="left:1263px;top:170px;width:54px;height:15px;background:#c0ffc0"></div>
<div class="t" style="left:1264px;top:171px;color:#000;">1,129.66</div>
<div class="t w" style="left:118px;top:533px;">02/08</div>
<div class="t w" style="left:219px;top:533px;">14/09</div>
<div class="t w" style="left:321px;top:533px;">31/10</div>
<div class="t w" style="left:423px;top:533px;">14/12</div>
<div class="t w" style="left:525px;top:533px;">29/01</div>
<div class="t w" style="left:627px;top:533px;">13/03</div>
<div class="t w" style="left:728px;top:533px;">27/04</div>
<div class="t w" style="left:16px;top:549px;">2560</div>
<div class="t w" style="left:114px;top:549px;">Aug</div>
<div class="t w" style="left:260px;top:549px;">Oct</div>
<div class="t w" style="left:399px;top:549px;">Dec</div>
<div class="t w" style="left:464px;top:549px;">2561</div>
<div class="t w" style="left:535px;top:549px;">Feb</div>
<div class="t w" style="left:674px;top:549px;">Apr</div>
<div class="t w" style="left:806px;top:549px;">Jun</div>
<!-- icon buttons -->
<div class="abs" style="left:1164px;top:331px;width:54px;height:18px;background:#fff"></div>
<div class="abs" style="left:1165px;top:332px;width:16px;height:16px;background:#000"></div>
<div class="abs" style="left:1183px;top:332px;width:16px;height:16px;background:#000"></div>
<div class="abs" style="left:1201px;top:332px;width:16px;height:16px;background:#e02020"></div>
<svg class="abs" style="left:1164px;top:331px" width="55" height="18" viewBox="0 0 55 18">
<path d="M9 2 L15 8.5 L11.5 8.5 L11.5 16 L6.5 16 L6.5 8.5 L3 8.5 Z" fill="#4ab8e8"/>
<path d="M27 16 L33 9.5 L29.5 9.5 L29.5 2 L24.5 2 L24.5 9.5 L21 9.5 Z" fill="#d02040"/>
<path d="M40.5 4 L49 13.5 M49 4 L40.5 13.5" stroke="#fff" stroke-width="1.8" fill="none"/>
</svg>

<!-- scrollbar -->
<div class="abs" style="left:10px;top:564px;width:20px;height:18px;background:#f0f0f0"></div>
<div class="abs" style="left:16px;top:568px;width:0;height:0;border-top:5px solid transparent;border-bottom:5px solid transparent;border-right:5px solid #000"></div>
<div class="abs" style="left:875px;top:563px;width:154px;height:20px;background:#a9a9a9;border:1px solid #c8c8c8;box-sizing:border-box"></div>
<div class="abs" style="left:876px;top:564px;width:3px;height:18px;background:#707070"></div>
<div class="abs" style="left:1024px;top:564px;width:4px;height:18px;background:#707070"></div>
<div class="abs" style="left:1030px;top:564px;width:20px;height:18px;background:#f0f0f0"></div>
<div class="abs" style="left:1038px;top:568px;width:0;height:0;border-top:5px solid transparent;border-bottom:5px solid transparent;border-left:5px solid #000"></div>
<!-- bottom toolbar -->
<div class="abs" style="left:1050px;top:563px;width:267px;height:19px;border-bottom:1px solid #fff;border-right:1px solid #fff;border-left:1px solid #fff;border-radius:0 0 3px 3px;box-sizing:border-box"></div>
<div class="abs" style="left:1054px;top:567px;width:2px;height:2px;background:#ddd;box-shadow:0 4px 0 #ddd,0 8px 0 #ddd"></div>
<div class="abs" style="left:1061px;top:564px;font-family:'Liberation Serif',serif;font-weight:bold;font-size:17px;line-height:18px;color:#ffff00;white-space:nowrap">F<span style="font-size:14px;position:relative;top:2px;left:-2px">+</span></div>
<div class="abs" style="left:1087px;top:564px;font-family:'Liberation Serif',serif;font-weight:bold;font-size:17px;line-height:18px;color:#ffff00;white-space:nowrap">F<span style="font-size:18px;position:relative;top:1px;left:-1px">-</span></div>
<div class="tb" style="left:1112px;font-weight:normal;font-size:12px;top:566px">|</div>
<div class="tb" style="left:1126px;letter-spacing:-0.4px">FULL</div>
<div class="tb" style="left:1168px;font-weight:normal;font-size:12px;top:566px">|</div>
<div class="tb" style="left:1183px;letter-spacing:3px">1Y</div>
<div class="tb" style="left:1214px;font-weight:normal;font-size:12px;top:566px">|</div>
<div class="tb" style="left:1226px;letter-spacing:4px">6M</div>
<div class="tb" style="left:1260px;font-weight:normal;font-size:12px;top:566px">|</div>
<div class="tb" style="left:1272px;letter-spacing:4px">3M</div>
<div class="tb" style="left:1306px;font-weight:normal;font-size:12px;top:566px">|</div>
</body></html>
